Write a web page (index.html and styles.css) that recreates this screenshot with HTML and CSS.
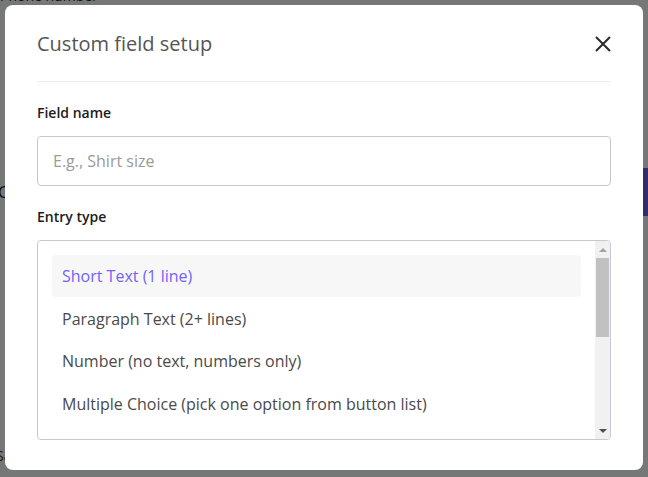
FILE: index.html
```html
<!DOCTYPE html>
<html lang="en">
<head>
    <meta charset="UTF-8">
    <meta name="viewport" content="width=device-width, initial-scale=1.0">
    <link rel="stylesheet" href="styles.css">
    <title>Custom field setup</title>
</head>
<body>
    <div class="page">
        <p class="page-top">Phone number</p>
        <div class="page-row">
            <span class="page-text">Custom fields</span>
            <button class="page-btn">Save</button>
        </div>
        <p class="page-bottom">Save changes</p>
    </div>

    <div class="overlay">
        <div class="modal">
            <div class="modal-header">
                <h2 class="modal-title">Custom field setup</h2>
                <button class="close-btn" aria-label="Close">
                    <svg width="16" height="16" viewBox="0 0 16 16">
                        <path d="M1 1 L15 15 M15 1 L1 15" stroke="#2b2b2b" stroke-width="2" fill="none"/>
                    </svg>
                </button>
            </div>

            <label class="field-label" for="fieldname">Field name</label>
            <input class="text-input" type="text" id="fieldname" placeholder="E.g., Shirt size">

            <div class="field-label entry-label">Entry type</div>
            <div class="entry-box">
                <ul class="entry-list">
                    <li class="entry selected">Short Text (1 line)</li>
                    <li class="entry">Paragraph Text (2+ lines)</li>
                    <li class="entry">Number (no text, numbers only)</li>
                    <li class="entry">Multiple Choice (pick one option from button list)</li>
                </ul>
                <div class="scrollbar">
                    <div class="sb-btn"><span class="arrow-up"></span></div>
                    <div class="sb-track"><div class="sb-thumb"></div></div>
                    <div class="sb-btn"><span class="arrow-down"></span></div>
                </div>
            </div>
        </div>
    </div>
</body>
</html>
```

FILE: styles.css
```css
*{
    box-sizing: border-box;
    font-family: "Open Sans", sans-serif;
}
body{
    margin: 0;
    background: #fff;
    height: 477px;
    overflow: hidden;
}
.page{
    display: flex;
    flex-direction: column;
    height: 477px;
    overflow: hidden;
}
.page-top{
    margin: -14px 0 0 0;
    font-size: 14px;
    color: #222;
}
.page-row{
    margin-top: 163px;
    display: flex;
    justify-content: space-between;
    align-items: center;
}
.page-text{
    margin-left: -2px;
    font-size: 16px;
    color: #111;
}
.page-btn{
    background: #6d5cf0;
    color: #fff;
    border: none;
    height: 48px;
    width: 60px;
    font-size: 15px;
}
.page-bottom{
    margin: auto 0 12px -4px;
    font-size: 14px;
    color: #333;
}
.overlay{
    position: fixed;
    inset: 0;
    background: rgba(0, 5, 2, 0.54);
    padding: 5px 5px 7px 5px;
}
.modal{
    background: #fff;
    border-radius: 8px;
    height: 465px;
    padding: 25px 32px 0 32px;
}
.modal-header{
    display: flex;
    justify-content: space-between;
    align-items: center;
    padding-bottom: 23px;
    border-bottom: 1px solid #ececec;
}
.modal-title{
    margin: 0;
    font-size: 20px;
    line-height: 28px;
    font-weight: 400;
    color: #555;
}
.close-btn{
    background: none;
    border: none;
    padding: 0;
    width: 16px;
    height: 16px;
    cursor: pointer;
}
.close-btn svg{
    display: block;
}
.field-label{
    display: block;
    margin-top: 21px;
    font-size: 14px;
    line-height: 20px;
    font-weight: 600;
    color: #1c1c1c;
}
.text-input{
    display: block;
    width: 100%;
    height: 50px;
    margin-top: 13px;
    padding: 0 15px;
    border: 1px solid #c3cad5;
    border-radius: 4px;
    font-size: 16px;
    color: #444;
}
.text-input::placeholder{
    color: #9a9a9a;
}
.entry-label{
    margin-top: 21px;
}
.entry-box{
    display: flex;
    height: 200px;
    margin-top: 13px;
    border: 1px solid #c3cad5;
    border-radius: 4px;
    overflow: hidden;
}
.entry-list{
    flex: 1;
    list-style: none;
    margin: 0;
    padding: 14px 14px 0 14px;
}
.entry{
    padding: 9px 10px;
    font-size: 16px;
    line-height: 24px;
    color: #4a4a4a;
    border-radius: 4px;
    white-space: nowrap;
}
.entry + .entry{
    margin-top: 0.5px;
}
.entry.selected{
    background: #f7f7f7;
    color: #7264f2;
}
.scrollbar{
    width: 15px;
    background: #f1f1f1;
    display: flex;
    flex-direction: column;
}
.sb-btn{
    height: 17px;
    display: flex;
    align-items: center;
    justify-content: center;
}
.arrow-up{
    border-left: 4px solid transparent;
    border-right: 4px solid transparent;
    border-bottom: 4px solid #a3a3a3;
}
.arrow-down{
    border-left: 4px solid transparent;
    border-right: 4px solid transparent;
    border-top: 4px solid #505050;
}
.sb-track{
    flex: 1;
    padding: 0 1px;
}
.sb-thumb{
    height: 79px;
    background: #c1c1c1;
}
```
